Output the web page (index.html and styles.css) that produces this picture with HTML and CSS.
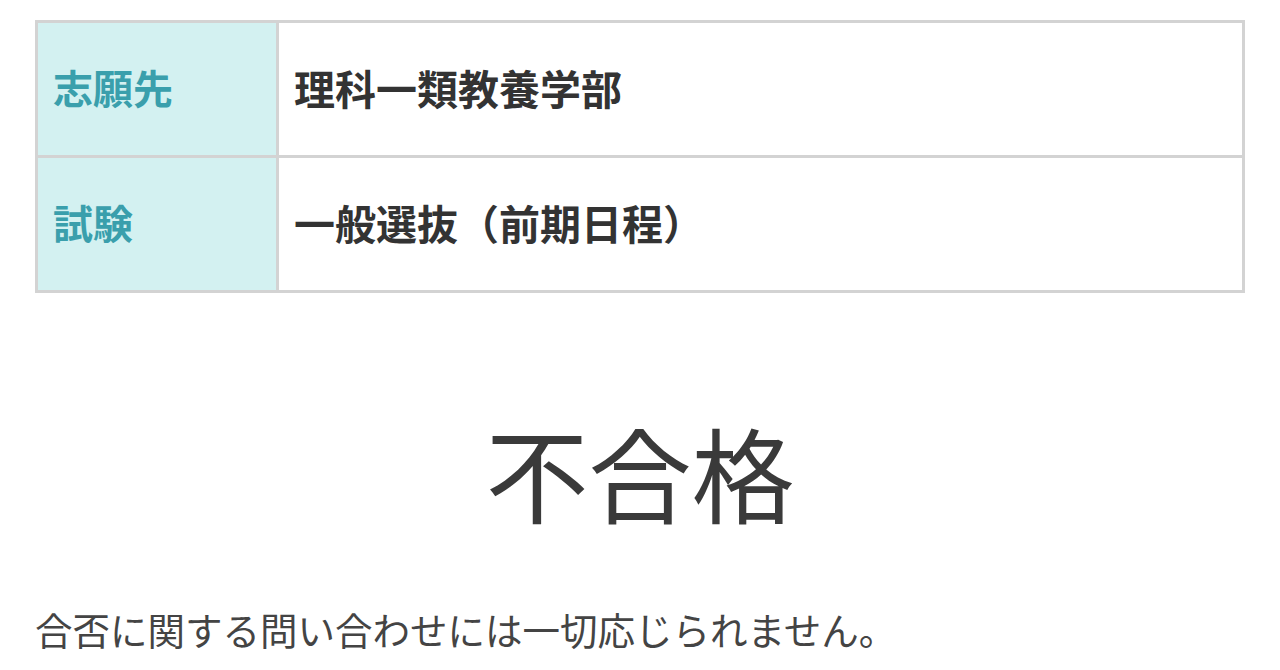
FILE: index.html
```html
<!DOCTYPE html>
<html lang="ja">
<head>
  <meta charset="UTF-8" />
  <title>合否照会</title>
  <link rel="stylesheet" href="styles.css">
</head>
<body>
  <table class="info">
    <tr>
      <th>志願先</th>
      <td>理科一類教養学部</td>
    </tr>
    <tr>
      <th>試験</th>
      <td>一般選抜（前期日程）</td>
    </tr>
  </table>

  <div class="result">不合格</div>

  <p class="note">合否に関する問い合わせには一切応じられません。</p>
</body>
</html>
```

FILE: styles.css
```css
body {
  margin: 0;
  padding: 20px 35px 0 35px;
  background: #fff;
  color: #333;
  font-family: "Noto Sans CJK JP", "Noto Sans", sans-serif;
}
.info {
  width: 100%;
  border-collapse: collapse;
  border: 3px solid #d3d3d3;
}
.info th,
.info td {
  border: 3px solid #d3d3d3;
  height: 128px;
  padding: 0 15px 4px 15px;
  text-align: left;
  font-size: 40px;
  font-weight: bold;
}
.info th {
  width: 208px;
  background: #d3f1f1;
  color: #3a9fac;
}
.info td {
  font-size: 41px;
  color: #333;
}
.result {
  margin-top: 127px;
  text-align: center;
  font-size: 103px;
  line-height: 1;
  color: #3a3a3a;
}
.note {
  margin: 78px 0 0 0;
  font-size: 37.5px;
  color: #444;
}
```
